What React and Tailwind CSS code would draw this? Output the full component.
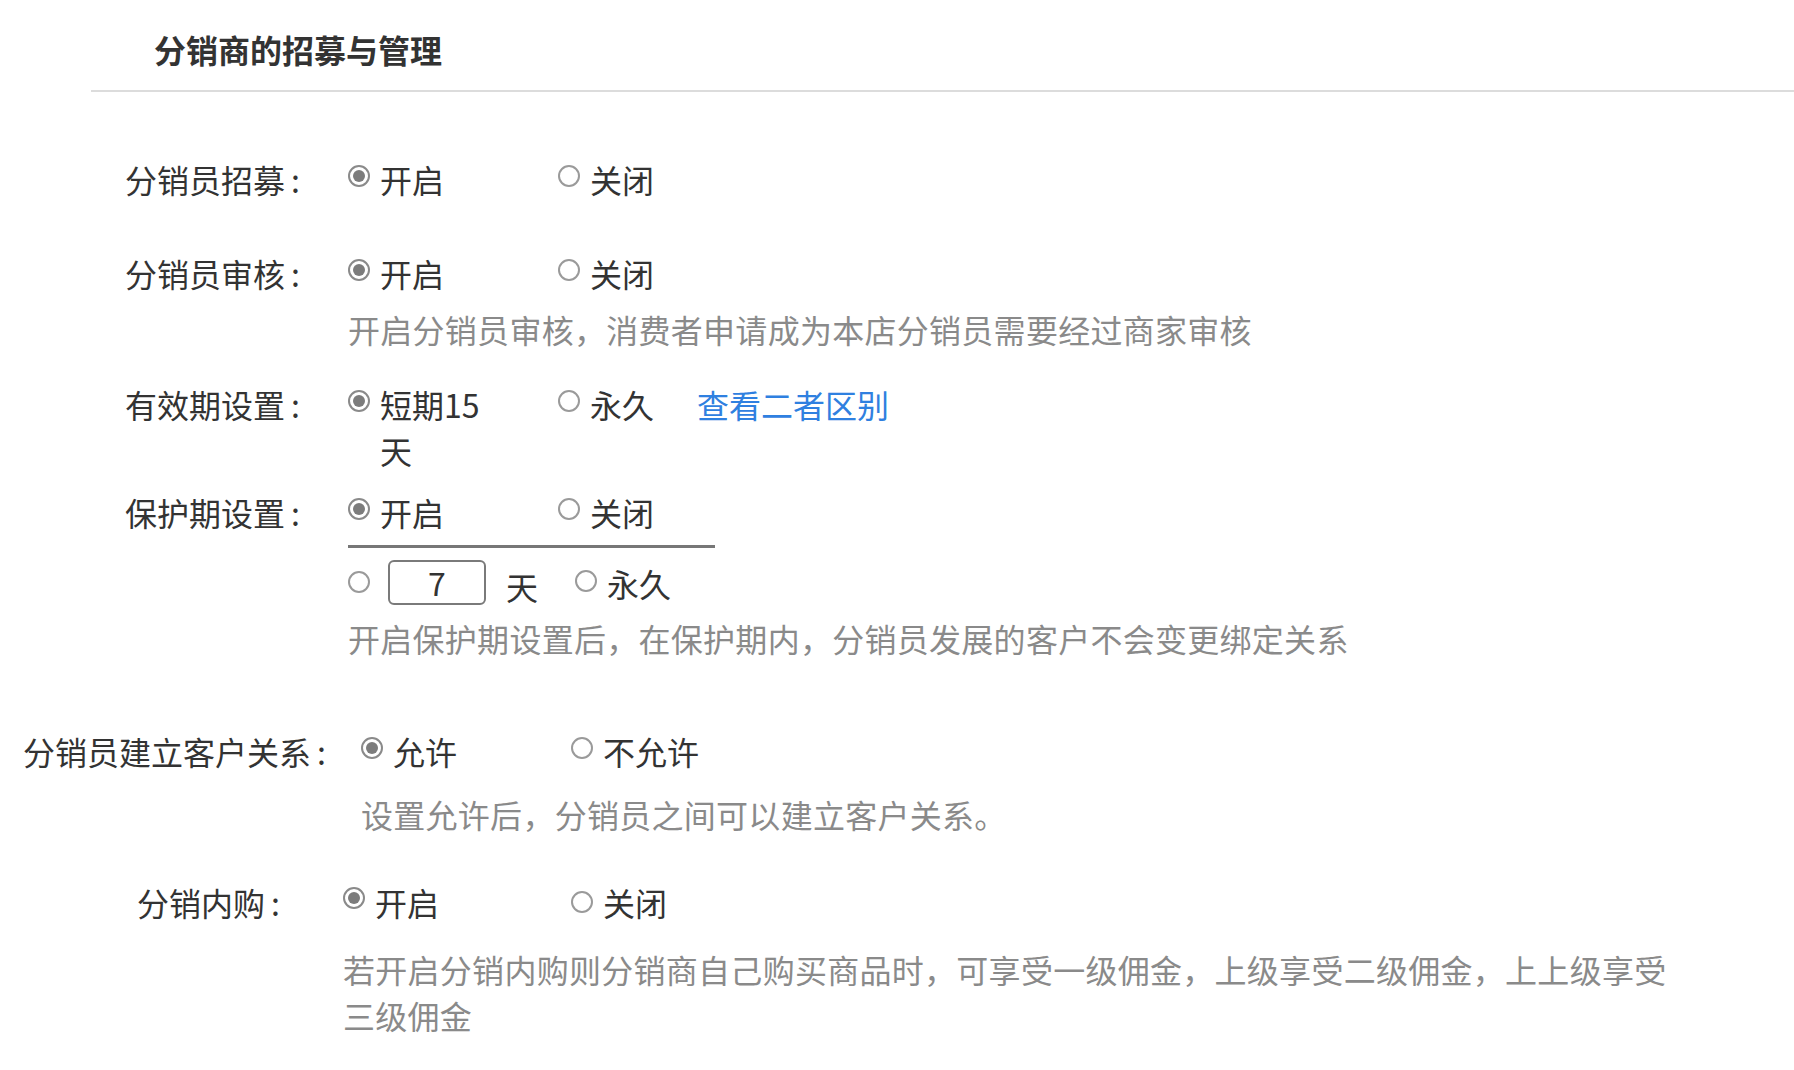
const Radio = ({ checked, className = "" }) => (
  <span
    className={`shrink-0 w-[22px] h-[22px] rounded-full border-2 flex items-center justify-center bg-white ${
      checked ? "border-[#8a8a8a]" : "border-[#9a9a9a]"
    } ${className}`}
  >
    {checked && <span className="w-[12px] h-[12px] rounded-full bg-[#7c7c7c]" />}
  </span>
)

const Option = ({ checked, label, width = "w-[210px]", textWidth = "w-[120px]", radioTop = "mt-[9px]" }) => (
  <div className={`flex items-start shrink-0 ${width}`}>
    <Radio checked={checked} className={radioTop} />
    <span className={`ml-[10px] ${textWidth}`}>{label}</span>
  </div>
)

const Label = ({ text, className }) => (
  <div className={`shrink-0 text-[#333] ${className}`}>
    {text}
    <span className="ml-[6px]">:</span>
  </div>
)

const Desc = ({ children, className = "" }) => (
  <div className={`text-[#8a8a8a] tracking-[0.28px] ${className}`}>{children}</div>
)

export default function App() {
  return (
    <div
      className="w-[1794px] h-[1070px] bg-white overflow-hidden text-[32px] leading-[46px] text-[#333]"
      style={{ fontFamily: '"Noto Sans CJK SC", "Noto Sans", sans-serif' }}
    >
      <div className="pl-[154px] pt-[29px] leading-[40px] font-bold text-[#333]">分销商的招募与管理</div>
      <div className="ml-[91px] mt-[21px] h-[2px] bg-[#dcdcdc]" />

      {/* 分销员招募 */}
      <div className="flex mt-[64px]">
        <Label text="分销员招募" className="w-[348px] pl-[125px]" />
        <Option checked label="开启" />
        <Option label="关闭" />
      </div>

      {/* 分销员审核 */}
      <div className="flex mt-[48px]">
        <Label text="分销员审核" className="w-[348px] pl-[125px]" />
        <div>
          <div className="flex">
            <Option checked label="开启" />
            <Option label="关闭" />
          </div>
          <Desc className="mt-[10px]">开启分销员审核，消费者申请成为本店分销员需要经过商家审核</Desc>
        </div>
      </div>

      {/* 有效期设置 */}
      <div className="flex mt-[29px]">
        <Label text="有效期设置" className="w-[348px] pl-[125px]" />
        <div className="flex items-start">
          <Option checked label="短期15天" />
          <Option label="永久" width="w-auto" textWidth="w-auto" />
          <span className="ml-[43px] text-[#2f80e0]">查看二者区别</span>
        </div>
      </div>

      {/* 保护期设置 */}
      <div className="flex mt-[16px]">
        <Label text="保护期设置" className="w-[348px] pl-[125px]" />
        <div>
          <div className="flex w-[367px] pb-[10px] border-b-[3px] border-[#777]">
            <Option checked label="开启" />
            <Option label="关闭" width="w-auto" textWidth="w-auto" />
          </div>
          <div className="flex items-center mt-[12px] h-[46px]">
            <Radio className="-mt-[3px]" />
            <div className="ml-[18px] w-[98px] h-[45px] -mt-[2px] border-2 border-[#7a7a7a] rounded-[6px] flex items-center justify-center text-[32px] leading-none text-[#333]">
              7
            </div>
            <span className="ml-[20px] mt-[6px]">天</span>
            <Radio className="ml-[37px] -mt-[4px]" />
            <span className="ml-[10px]">永久</span>
          </div>
          <Desc className="mt-[9px]">开启保护期设置后，在保护期内，分销员发展的客户不会变更绑定关系</Desc>
        </div>
      </div>

      {/* 分销员建立客户关系 */}
      <div className="flex mt-[67px]">
        <Label text="分销员建立客户关系" className="w-[361px] pl-[23px]" />
        <div>
          <div className="flex">
            <Option checked label="允许" />
            <Option label="不允许" />
          </div>
          <Desc className="mt-[17px]">设置允许后，分销员之间可以建立客户关系。</Desc>
        </div>
      </div>

      {/* 分销内购 */}
      <div className="flex mt-[42px]">
        <Label text="分销内购" className="w-[343px] pl-[137px]" />
        <div>
          <div className="flex">
            <Option checked label="开启" width="w-[228px]" radioTop="mt-[8px]" />
            <Option label="关闭" radioTop="mt-[12px]" />
          </div>
          <Desc className="mt-[21px] w-[1336px]">
            若开启分销内购则分销商自己购买商品时，可享受一级佣金，上级享受二级佣金，上上级享受三级佣金
          </Desc>
        </div>
      </div>
    </div>
  )
}
